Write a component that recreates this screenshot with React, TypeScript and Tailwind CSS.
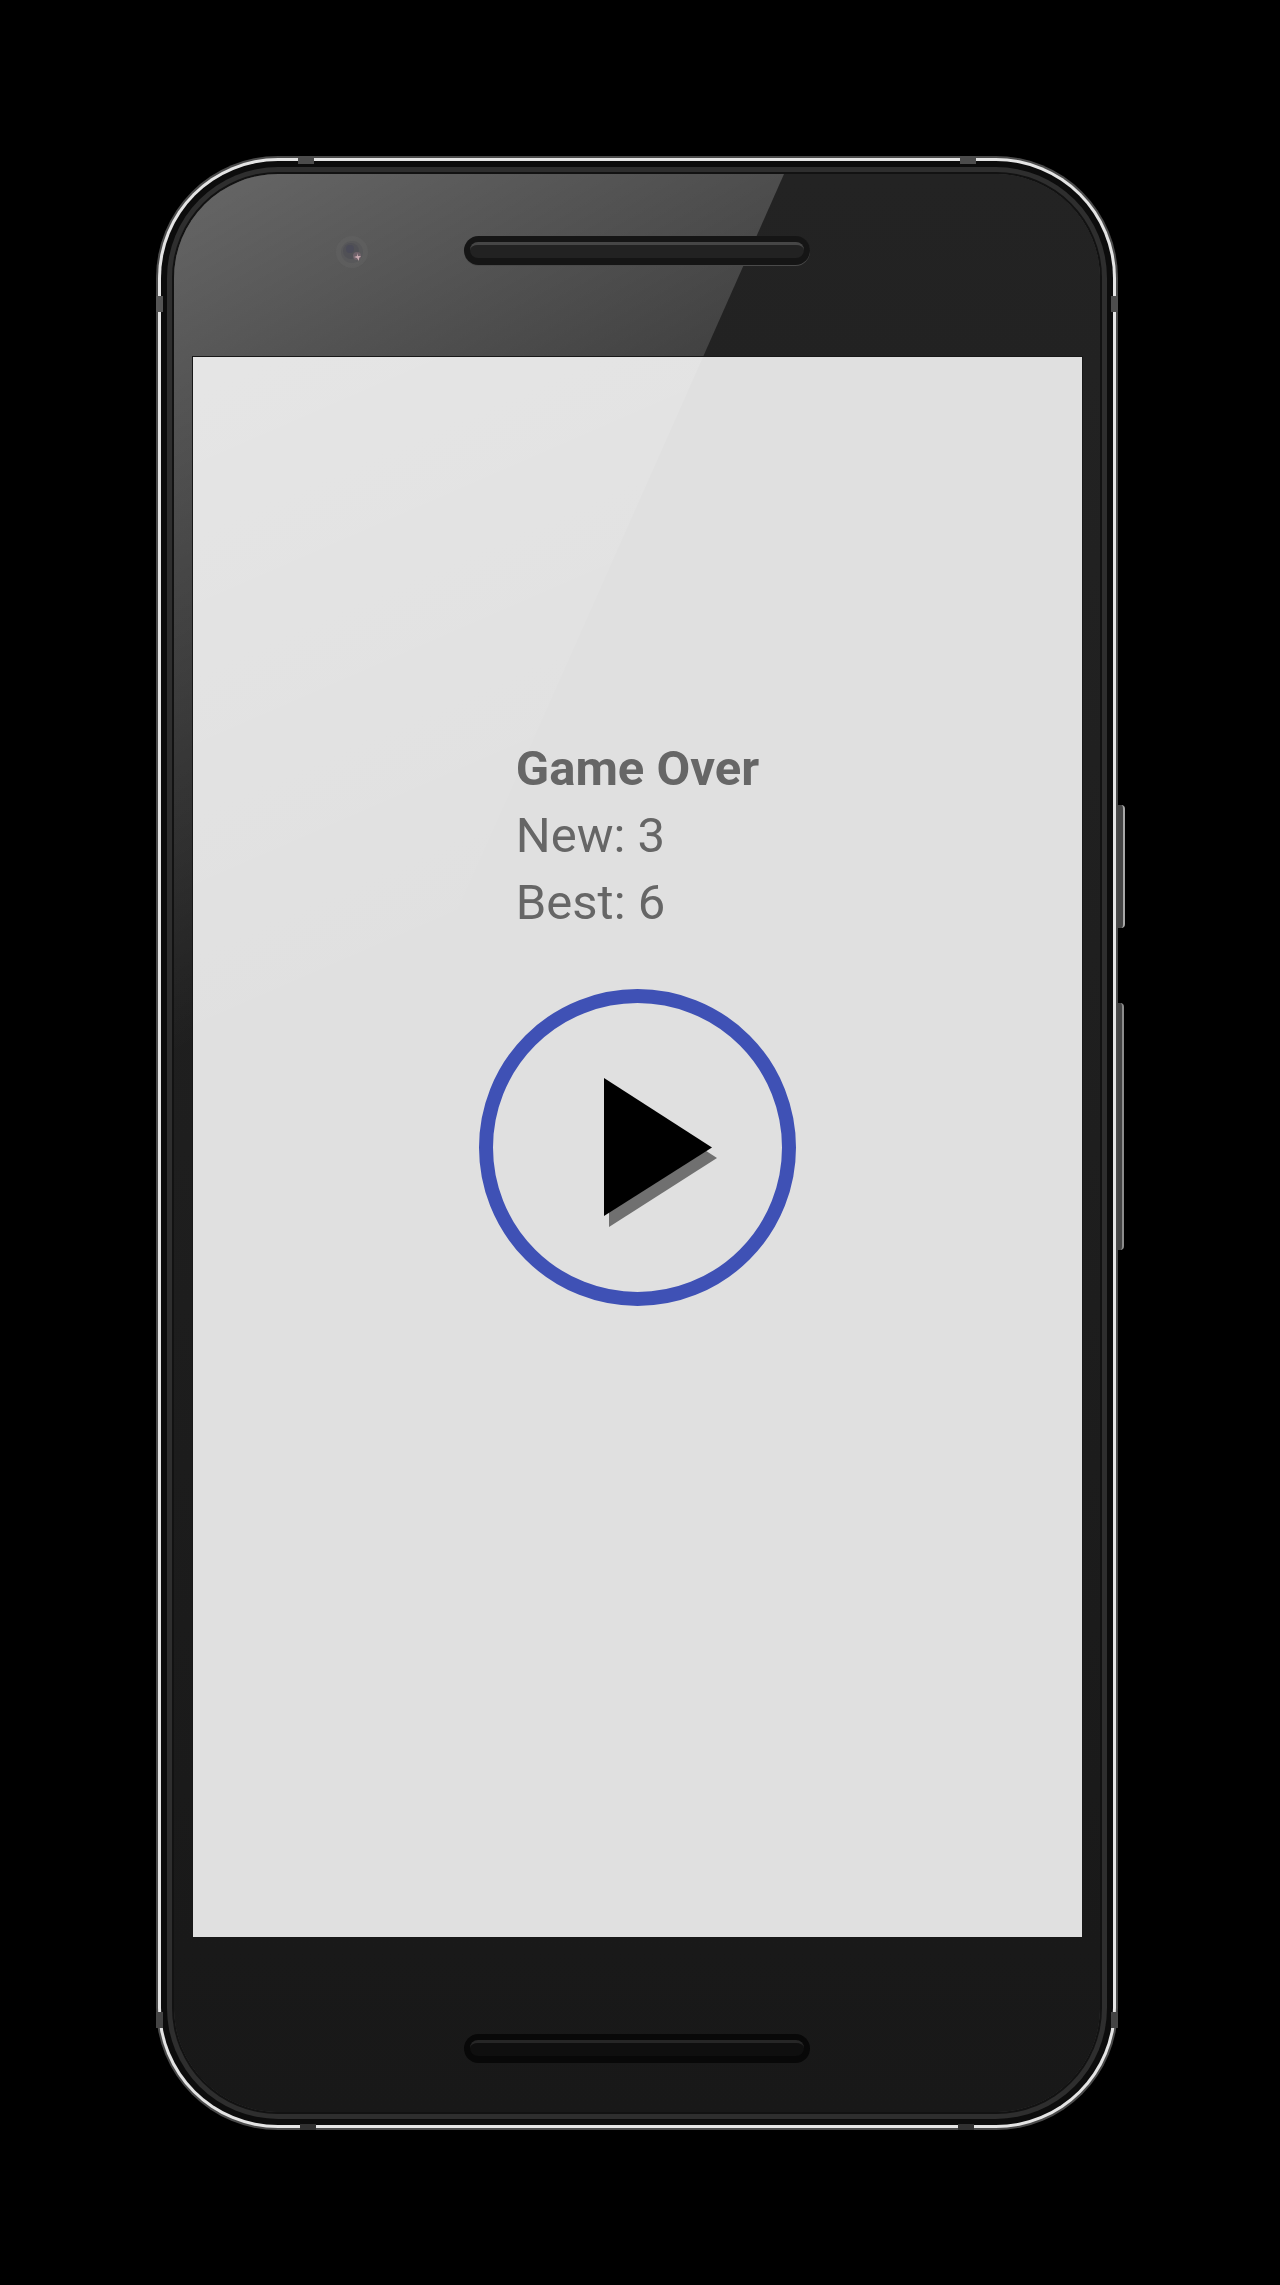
import { useState } from "react";

const PhoneGlare = () => (
  <svg
    className="absolute inset-0 h-full w-full"
    viewBox="0 0 926 1938"
    preserveAspectRatio="none"
    aria-hidden="true"
  >
    <defs>
      <linearGradient id="glass-glare" gradientUnits="userSpaceOnUse" x1="0" y1="0" x2="370" y2="680">
        <stop offset="0" stopColor="#fff" stopOpacity="0.31" />
        <stop offset="1" stopColor="#fff" stopOpacity="0" />
      </linearGradient>
    </defs>
    <path d="M0 0H610L176 980H0Z" fill="url(#glass-glare)" />
  </svg>
);

const ScreenGlare = () => (
  <svg
    className="absolute inset-0 h-full w-full"
    viewBox="0 0 889 1580"
    preserveAspectRatio="none"
    aria-hidden="true"
  >
    <defs>
      <linearGradient id="screen-glare" gradientUnits="userSpaceOnUse" x1="0" y1="0" x2="270" y2="620">
        <stop offset="0" stopColor="#fff" stopOpacity="0.17" />
        <stop offset="1" stopColor="#fff" stopOpacity="0" />
      </linearGradient>
    </defs>
    <path d="M0 0H510L155 800H0Z" fill="url(#screen-glare)" />
  </svg>
);

const Camera = () => (
  <svg className="h-8 w-8" viewBox="0 0 32 32" aria-hidden="true">
    <circle cx="16" cy="16" r="16" fill="#666" opacity="0.35" />
    <circle cx="16" cy="16" r="11" fill="#58585a" />
    <circle cx="15" cy="15" r="8" fill="#515156" />
    <circle cx="14" cy="13" r="4" fill="#4b4b58" />
    <circle cx="21" cy="20" r="4" fill="#75656e" opacity="0.8" />
    <path d="M21 17l1 3 3 0-2 2 0 3-2-3-3-1 3-1z" fill="#c9a9b0" />
  </svg>
);

const Antennas = () => (
  <div className="absolute inset-0 flex flex-col justify-between">
    <div className="flex flex-col gap-[132px]">
      <div className="flex justify-between px-[142px]">
        <span className="h-2 w-4 bg-[#4c4c4c]" />
        <span className="h-2 w-4 bg-[#4c4c4c]" />
      </div>
      <div className="flex justify-between">
        <span className="h-4 w-[7px] bg-[#555]" />
        <span className="h-4 w-[7px] bg-[#4c4c4c]" />
      </div>
    </div>
    <div className="flex flex-col gap-[96px]">
      <div className="flex justify-between">
        <span className="h-4 w-[7px] bg-[#444]" />
        <span className="h-4 w-[7px] bg-[#444]" />
      </div>
      <div className="flex justify-between px-[144px]">
        <span className="h-[6px] w-4 bg-[#303030]" />
        <span className="h-[6px] w-4 bg-[#303030]" />
      </div>
    </div>
  </div>
);

const SideButtons = () => (
  <div className="absolute inset-y-0 left-full flex flex-col items-start gap-[75px] pt-[649px]">
    <span className="h-[123px] w-[7px] rounded-r-sm border-r-2 border-[#a8a8a8] bg-[#444]" />
    <span className="h-[247px] w-[6px] rounded-r-sm border-r-2 border-[#8c8c8c] bg-[#444]" />
  </div>
);

const PlayButton = ({ onClick }: { onClick: () => void }) => (
  <button
    onClick={onClick}
    aria-label="Play"
    className="relative h-[317px] w-[317px] cursor-pointer rounded-full border-14 border-[#3f51b5]"
  >
    <svg className="h-full w-full" viewBox="14 14 289 289" aria-hidden="true">
      <path d="M130 99L238 169L130 238Z" fill="#707070" />
      <path d="M125 89L233 158.500L125 227Z" fill="#000" />
    </svg>
  </button>
);

export default function App() {
  const [score, setScore] = useState(3);
  const best = 6;

  return (
    <main className="min-h-screen bg-black pt-[156px] pr-[162px] pb-[155px] pl-[156px] font-[Roboto,sans-serif]">
      <div className="relative p-[18px]">
        {/* Phone glass, the metal rim is made of shadow rings */}
        <div className="relative overflow-hidden rounded-[104px] bg-linear-to-b from-[#232323] via-[#1e1e1e] to-[#181818] shadow-[0_0_0_2px_#121212,0_0_0_7px_#2e2e2e,0_0_0_13px_#0c0c0c,0_0_0_16px_#e4e4e4,0_0_0_18px_#4a4a4a]">
          <PhoneGlare />

          <header className="relative grid h-[183px] grid-cols-[1fr_346px_1fr] items-start pt-[62px]">
            <div className="flex justify-end pr-[96px]">
              <Camera />
            </div>
            <div className="h-[29px] rounded-full bg-[#151515] p-[6px] shadow-[0_1px_0_#4a4a4a]">
              <div className="h-4 rounded-full border-t-3 border-[#464646] bg-[#222]" />
            </div>
          </header>

          <section className="relative mr-[18px] ml-[19px] flex aspect-9/16 flex-col items-center gap-[53px] bg-[#e0e0e0] pt-[378px] shadow-[0_0_0_1px_#181818]">
            <ScreenGlare />
            <div className="relative text-[49px] leading-[67px] text-[#666]">
              <h1 className="font-bold">Game Over</h1>
              <p>New: {score}</p>
              <p>Best: {best}</p>
            </div>
            <PlayButton onClick={() => setScore(0)} />
          </section>

          <footer className="relative flex h-[175px] items-start justify-center pt-[97px]">
            <div className="h-[29px] w-[346px] rounded-full bg-[#080808] p-[6px]">
              <div className="h-4 rounded-full border-t-3 border-[#262626] bg-[#0f0f0f]" />
            </div>
          </footer>
        </div>

        <Antennas />
        <SideButtons />
      </div>
    </main>
  );
}
